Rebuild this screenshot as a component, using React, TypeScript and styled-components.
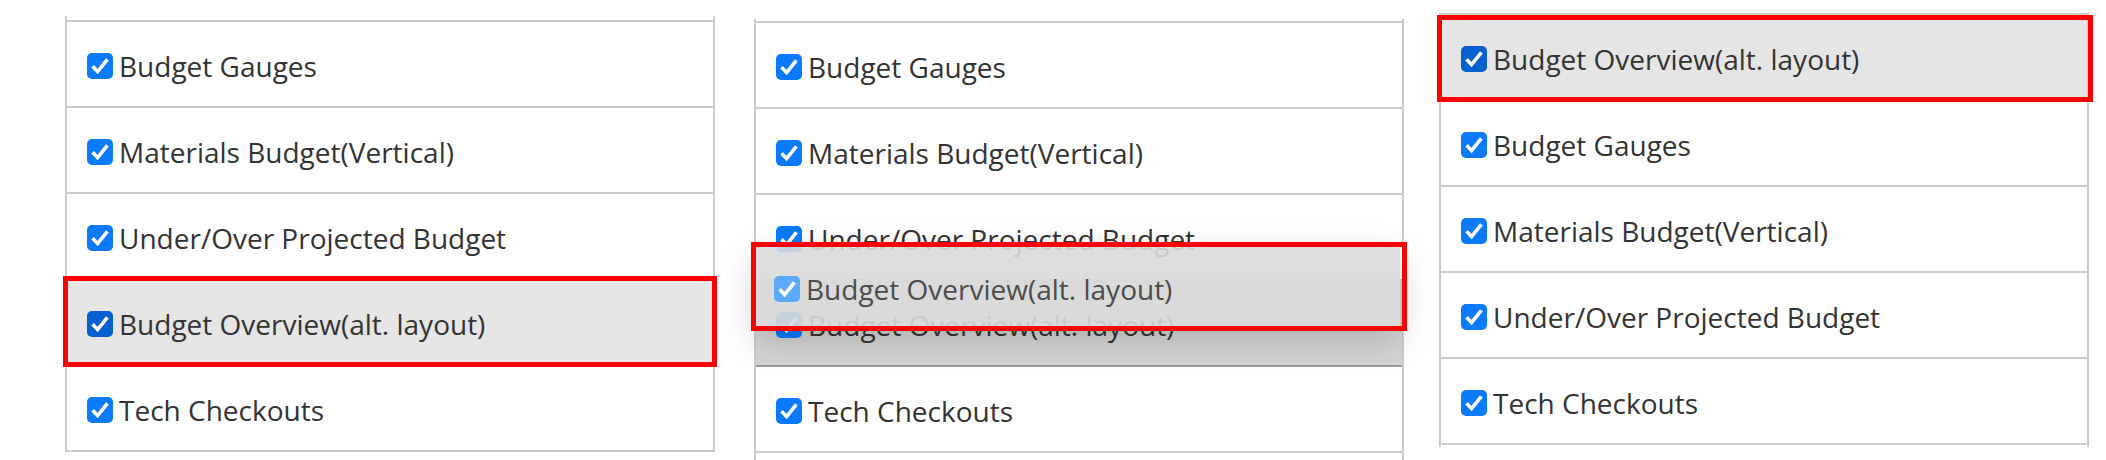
import styled, { createGlobalStyle } from 'styled-components';

const GlobalStyle = createGlobalStyle`
  html, body {
    margin: 0;
    padding: 0;
    background: #fff;
  }
  body {
    font-family: "Open Sans", "Noto Sans", sans-serif;
    color: #333;
  }
`;

type Variant = 'normal' | 'selected' | 'placeholder';

const rowBg: Record<Variant, string> = {
  normal: '#fff',
  selected: '#e5e5e5',
  placeholder: '#d4d4d4',
};

const rowLine: Record<Variant, string> = {
  normal: '#cccccc',
  selected: '#aaaaaa',
  placeholder: '#999999',
};

const Page = styled.div`
  display: flex;
  align-items: flex-start;
  height: 460px;
  padding-left: 65px;
  overflow: hidden;
`;

const Panel = styled.div<{ $top: number; $gap: number; $sliver: number; $tail: number }>`
  position: relative;
  box-sizing: border-box;
  width: 650px;
  flex: none;
  margin-top: ${p => p.$top}px;
  margin-left: ${p => p.$gap}px;
  padding-top: ${p => p.$sliver}px;
  padding-bottom: ${p => p.$tail}px;
  border-left: 2px solid #ccc;
  border-right: 2px solid #ccc;
`;

const List = styled.div`
  display: flex;
  flex-direction: column;
  border-top: 2px solid #ccc;
`;

const Row = styled.div<{ $variant: Variant }>`
  position: relative;
  box-sizing: border-box;
  height: 86px;
  display: flex;
  align-items: center;
  padding: 3px 0 0 12px;
  background: ${p => rowBg[p.$variant]};
  border-bottom: 2px solid ${p => rowLine[p.$variant]};
`;

const Box = styled.span<{ $tone: string }>`
  flex: none;
  width: 26px;
  height: 26px;
  margin: 0 6px 0 8px;
  border-radius: 5px;
  background: ${p => p.$tone};
  display: flex;
  align-items: center;
  justify-content: center;
  svg {
    display: block;
  }
`;

const Label = styled.span<{ $color?: string }>`
  font-size: 28px;
  line-height: 38px;
  white-space: nowrap;
  color: ${p => p.$color || '#333'};
`;

const Highlight = styled.div<{ $t: number; $r: number; $b: number; $l: number }>`
  position: absolute;
  z-index: 3;
  box-sizing: border-box;
  top: ${p => p.$t}px;
  right: ${p => p.$r}px;
  bottom: ${p => p.$b}px;
  left: ${p => p.$l}px;
  border: 5px solid #ff0000;
  pointer-events: none;
`;

const Ghost = styled.div`
  position: absolute;
  z-index: 2;
  top: 226px;
  left: -2px;
  width: 646px;
  height: 86px;
  box-shadow: 0 10px 34px rgba(0, 0, 0, 0.18);
`;

const GhostBody = styled.div`
  box-sizing: border-box;
  height: 100%;
  display: flex;
  align-items: center;
  padding: 2px 0 0 12px;
  background: rgba(218, 218, 218, 0.9);
`;

const CheckMark = () => (
  <svg width="26" height="26" viewBox="0 0 26 26">
    <polyline
      points="5.6,13.2 10.6,18.6 20.4,6.4"
      fill="none"
      stroke="#fff"
      strokeWidth="3.6"
      strokeLinejoin="miter"
    />
  </svg>
);

const Check = ({ tone = '#0a7bff' }: { tone?: string }) => (
  <Box $tone={tone}>
    <CheckMark />
  </Box>
);

const Item = ({ text, variant = 'normal', children }: { text: string; variant?: Variant; children?: any }) => (
  <Row $variant={variant}>
    <Check tone={variant === 'selected' ? '#0461cf' : '#0a7bff'} />
    <Label>{text}</Label>
    {children}
  </Row>
);

const GAUGES = 'Budget Gauges';
const MATERIALS = 'Materials Budget(Vertical)';
const PROJECTED = 'Under/Over Projected Budget';
const OVERVIEW = 'Budget Overview(alt. layout)';
const TECH = 'Tech Checkouts';

const App = () => {
  return (
    <>
      <GlobalStyle />
      <Page>
        <Panel $top={16} $gap={0} $sliver={4} $tail={0}>
          <List>
            <Item text={GAUGES} />
            <Item text={MATERIALS} />
            <Item text={PROJECTED} />
            <Item text={OVERVIEW} variant="selected">
              <Highlight $t={-4} $r={-4} $b={-3} $l={-4} />
            </Item>
            <Item text={TECH} />
          </List>
        </Panel>

        <Panel $top={19} $gap={39} $sliver={2} $tail={20}>
          <List>
            <Item text={GAUGES} />
            <Item text={MATERIALS} />
            <Item text={PROJECTED} />
            <Item text={OVERVIEW} variant="placeholder" />
            <Item text={TECH} />
          </List>
          <Ghost>
            <GhostBody>
              <Check tone="#5aabff" />
              <Label $color="#4c4c4c">{OVERVIEW}</Label>
            </GhostBody>
            <Highlight $t={-3} $r={-7} $b={0} $l={-3} />
          </Ghost>
        </Panel>

        <Panel $top={13} $gap={35} $sliver={0} $tail={2}>
          <List>
            <Item text={OVERVIEW} variant="selected">
              <Highlight $t={0} $r={-6} $b={-3} $l={-4} />
            </Item>
            <Item text={GAUGES} />
            <Item text={MATERIALS} />
            <Item text={PROJECTED} />
            <Item text={TECH} />
          </List>
        </Panel>
      </Page>
    </>
  );
};

export default App;
